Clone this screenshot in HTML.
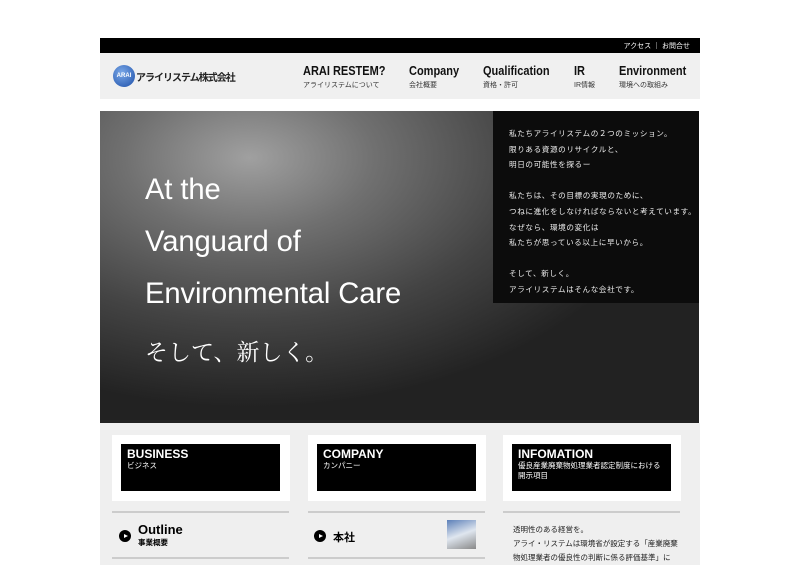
<!DOCTYPE html>
<html><head><meta charset="utf-8"><style>
*{margin:0;padding:0;box-sizing:border-box}
body{width:800px;height:565px;background:#fff;position:relative;overflow:hidden;font-family:"Liberation Sans","Noto Sans CJK JP",sans-serif}
.a{position:absolute}
.top{left:100px;top:38px;width:600px;height:15px;background:#000;color:#fff;font-size:7px;text-align:right;padding:3px 10px 0 0}
.nav{left:100px;top:53px;width:600px;height:46px;background:#f0f0f0}
.ni{position:absolute;top:11px;color:#111}
.ni b{display:block;font-size:12.5px;font-weight:bold;line-height:14px;transform:scaleX(0.88);transform-origin:left}
.ni s{display:block;text-decoration:none;font-size:7px;color:#333;margin-top:2px}
.hero{left:100px;top:111px;width:599px;height:312px;background:radial-gradient(ellipse 70% 80% at 25% 15%,#a0a0a0 0%,#707070 30%,#444 65%,#222 100%)}
.ht{left:145px;color:#fff;font-size:29.2px;line-height:52px;top:164px;letter-spacing:-0.1px}
.box{left:493px;top:111px;width:206px;height:192px;background:#0c0c0c;color:#eee;font-size:7.6px;padding:15px 0 0 16px;line-height:15.6px;letter-spacing:0.6px;white-space:nowrap}
.bot{left:100px;top:423px;width:600px;height:142px;background:#efefef}
.card{position:absolute;top:12px;width:178px;height:66px;background:#fff}
.card div{position:absolute;left:9px;top:9px;width:159px;height:47px;background:#000;color:#fff;padding:4px 6px}
.card b{font-size:12px;display:block;line-height:13px}
.card span{font-size:7.5px;display:block;line-height:10px}
.ln{position:absolute;height:2px;background:#ccc;width:177px}
.pl{position:absolute;width:12px;height:12px;border-radius:50%;background:#000}
.pl:after{content:"";position:absolute;left:5px;top:3.5px;border-left:4px solid #fff;border-top:2.5px solid transparent;border-bottom:2.5px solid transparent}
</style></head><body>
<div class="a top">アクセス ｜ お問合せ</div>
<div class="a nav">
 <div class="a" style="left:13px;top:12px;width:22px;height:22px;border-radius:50%;background:radial-gradient(circle at 40% 35%,#7aa8e8,#1d4fa8);color:#fff;font-size:6px;font-weight:bold;line-height:22px;text-align:center">ARAI</div>
 <div class="a" style="left:36px;top:16px;font-size:10px;font-weight:bold;color:#222;letter-spacing:-1px">アライリステム株式会社</div>
 <div class="ni" style="left:203px"><b>ARAI RESTEM?</b><s>アライリステムについて</s></div>
 <div class="ni" style="left:309px"><b>Company</b><s>会社概要</s></div>
 <div class="ni" style="left:383px"><b>Qualification</b><s>資格・許可</s></div>
 <div class="ni" style="left:474px"><b>IR</b><s>IR情報</s></div>
 <div class="ni" style="left:519px"><b>Environment</b><s>環境への取組み</s></div>
</div>
<div class="a hero"></div>
<div class="a ht">At the<br>Vanguard of<br>Environmental Care</div>
<div class="a" style="left:145px;top:334px;color:#fff;font-size:23px;font-family:'Noto Serif CJK SC','Noto Sans CJK JP',serif">そして、新しく。</div>
<div class="a box">私たちアライリステムの２つのミッション。<br>限りある資源のリサイクルと、<br>明日の可能性を探るー<br><br>私たちは、その目標の実現のために、<br>つねに進化をしなければならないと考えています。<br>なぜなら、環境の変化は<br>私たちが思っている以上に早いから。<br><br>そして、新しく。<br>アライリステムはそんな会社です。</div>
<div class="a bot">
 <div class="card" style="left:12px"><div><b>BUSINESS</b><span>ビジネス</span></div></div>
 <div class="card" style="left:208px"><div><b>COMPANY</b><span>カンパニー</span></div></div>
 <div class="card" style="left:403px"><div><b>INFOMATION</b><span>優良産業廃棄物処理業者認定制度における<br>開示項目</span></div></div>
 <div class="ln" style="left:12px;top:88px"></div>
 <div class="ln" style="left:208px;top:88px"></div>
 <div class="ln" style="left:403px;top:88px"></div>
 <div class="ln" style="left:12px;top:134px"></div>
 <div class="ln" style="left:208px;top:134px"></div>
 <div class="pl" style="left:19px;top:107px"></div>
 <div class="a" style="left:38px;top:99px;font-size:13px;font-weight:bold">Outline</div>
 <div class="a" style="left:38px;top:114px;font-size:7.5px;font-weight:bold">事業概要</div>
 <div class="pl" style="left:214px;top:107px"></div>
 <div class="a" style="left:233px;top:106px;font-size:11px;font-weight:bold">本社</div>
 <div class="a" style="left:347px;top:97px;width:29px;height:29px;background:linear-gradient(160deg,#5b7fb8,#dfe6ef 50%,#888)"></div>
 <div class="a" style="left:413px;top:100px;font-size:7.5px;line-height:14px;color:#222">透明性のある経営を。<br>アライ・リステムは環境省が設定する「産業廃棄<br>物処理業者の優良性の判断に係る評価基準」に</div>
</div>
</body></html>
